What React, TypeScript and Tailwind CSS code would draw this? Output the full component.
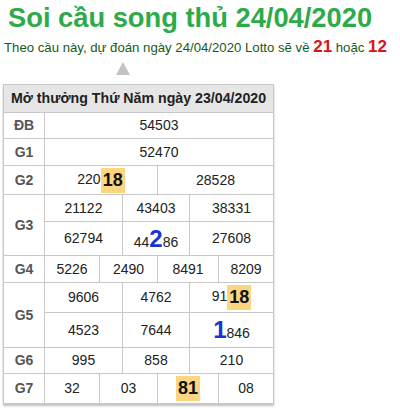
import React from "react";

const B = "border border-[#c8c8c8]";
const td = `${B} text-center text-[14px] text-[#222] p-0`;
const lab = `${B} text-center text-[14px] font-bold text-[#555] p-0`;

function Hi({ children }: { children: React.ReactNode }) {
  return (
    <span className="inline-block bg-[#fcd581] px-[2px] text-[18px] font-bold leading-[25px] text-[#111] align-middle">
      {children}
    </span>
  );
}
function Blue({ children }: { children: React.ReactNode }) {
  return <span className="text-[24px] font-bold leading-[28px] text-[#1436d8]">{children}</span>;
}

export default function App() {
  return (
    <div className="w-[400px] h-[409px] bg-white overflow-hidden" style={{ fontFamily: "'Liberation Sans', Arial, sans-serif" }}>
      <h1 className="pl-[8px] pt-[3px] text-[27.3px] font-bold leading-[30px] whitespace-nowrap text-[#2eaa4a]">Soi cầu song thủ 24/04/2020</h1>
      <p className="pl-[4px] mt-[5px] text-[13.2px] leading-[18px] whitespace-nowrap text-[#175a17]">
        Theo cầu này, dự đoán ngày 24/04/2020 Lotto sẽ về{" "}
        <b className="text-[17px] text-[#dd1111]">21</b> hoặc <b className="text-[17px] text-[#dd1111]">12</b>
      </p>
      <div className="flex pl-[116px] mt-[5px]">
        <div className="w-0 h-0 border-l-[7px] border-r-[7px] border-b-[13px] border-l-transparent border-r-transparent border-b-[#c3c3c3]" />
      </div>
      <table className="ml-[3px] mt-[9px] w-[270px] table-fixed border-collapse shadow-[0_2px_2px_rgba(0,0,0,0.25)]">
        <colgroup>
          <col className="w-[41px]" />
          <col className="w-[55px]" />
          <col className="w-[23px]" />
          <col className="w-[35px]" />
          <col className="w-[32px]" />
          <col className="w-[29px]" />
          <col className="w-[55px]" />
        </colgroup>
        <tbody>
          <tr className="h-[28px] bg-[#e6e6e6]">
            <th colSpan={7} className={`${B} text-[14.2px] font-bold text-[#222] text-center whitespace-nowrap p-0`}>Mở thưởng Thứ Năm ngày 23/04/2020</th>
          </tr>
          <tr className="h-[26px]">
            <td className={lab}>ĐB</td>
            <td colSpan={6} className={td}>54503</td>
          </tr>
          <tr className="h-[27px]">
            <td className={lab}>G1</td>
            <td colSpan={6} className={td}>52470</td>
          </tr>
          <tr className="h-[29px]">
            <td className={lab}>G2</td>
            <td colSpan={3} className={td}>220<Hi>18</Hi></td>
            <td colSpan={3} className={td}>28528</td>
          </tr>
          <tr className="h-[27px]">
            <td rowSpan={2} className={lab}>G3</td>
            <td colSpan={2} className={td}>21122</td>
            <td colSpan={2} className={td}>43403</td>
            <td colSpan={2} className={td}>38331</td>
          </tr>
          <tr className="h-[34px]">
            <td colSpan={2} className={td}>62794</td>
            <td colSpan={2} className={td}>44<Blue>2</Blue>86</td>
            <td colSpan={2} className={td}>27608</td>
          </tr>
          <tr className="h-[27px]">
            <td className={lab}>G4</td>
            <td className={td}>5226</td>
            <td colSpan={2} className={td}>2490</td>
            <td colSpan={2} className={td}>8491</td>
            <td className={td}>8209</td>
          </tr>
          <tr className="h-[30px]">
            <td rowSpan={2} className={lab}>G5</td>
            <td colSpan={2} className={td}>9606</td>
            <td colSpan={2} className={td}>4762</td>
            <td colSpan={2} className={td}>91<Hi>18</Hi></td>
          </tr>
          <tr className="h-[35px]">
            <td colSpan={2} className={td}>4523</td>
            <td colSpan={2} className={td}>7644</td>
            <td colSpan={2} className={td}><Blue>1</Blue>846</td>
          </tr>
          <tr className="h-[26px]">
            <td className={lab}>G6</td>
            <td colSpan={2} className={td}>995</td>
            <td colSpan={2} className={td}>858</td>
            <td colSpan={2} className={td}>210</td>
          </tr>
          <tr className="h-[30px]">
            <td className={lab}>G7</td>
            <td className={td}>32</td>
            <td colSpan={2} className={td}>03</td>
            <td colSpan={2} className={td}><Hi>81</Hi></td>
            <td className={td}>08</td>
          </tr>
        </tbody>
      </table>
    </div>
  );
}
